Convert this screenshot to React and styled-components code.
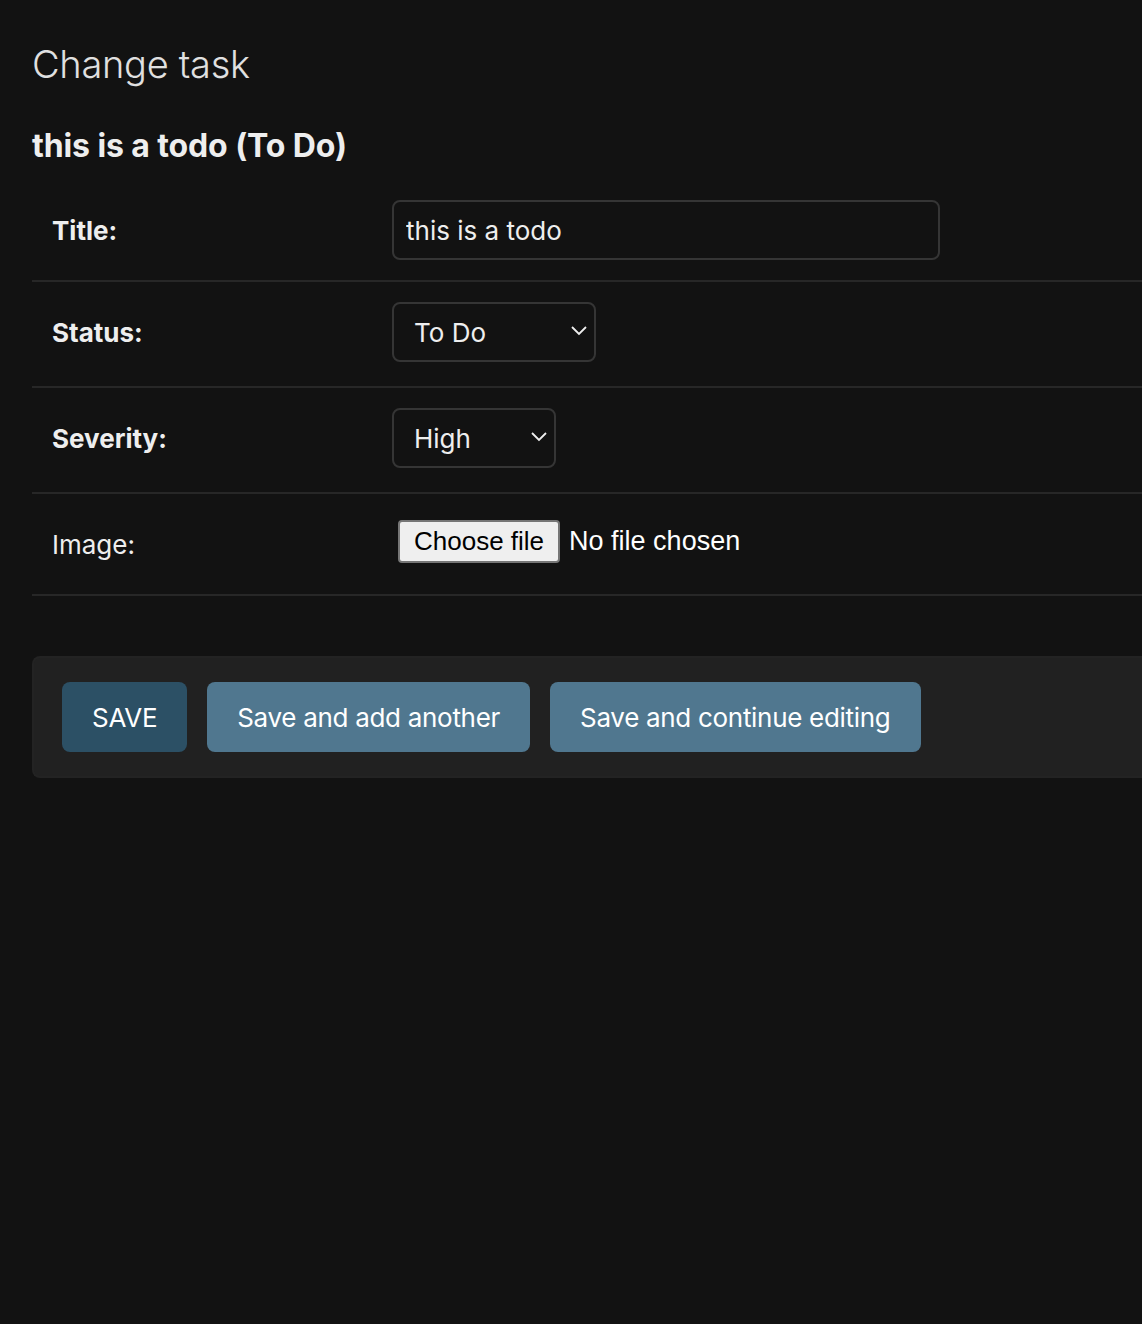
import React from "react";
import styled, { createGlobalStyle } from "styled-components";

const Global = createGlobalStyle`
  html, body { margin: 0; padding: 0; background: #121212; }
  body { font-family: Inter, "Noto Sans", sans-serif; color: #eeeeee; overflow: hidden; }
  * { box-sizing: border-box; }
`;

const Page = styled.main`
  min-height: 1324px;
  padding: 40px 0 0 32px;
`;

const Title = styled.h1`
  margin: 0;
  font-size: 38px;
  font-weight: 300;
  line-height: 48px;
  color: #e0e0e0;
  letter-spacing: -0.3px;
`;

const Subtitle = styled.h2`
  margin: 38px 0 0;
  font-size: 32px;
  font-weight: 700;
  line-height: 40px;
  color: #eeeeee;
  letter-spacing: -0.1px;
`;

const Fieldset = styled.fieldset`
  margin: 14px 0 0;
  padding: 0;
  border: none;
`;

const Row = styled.div`
  display: flex;
  align-items: center;
  padding: ${(p) => (p.$select ? "20px 20px 24px" : "20px")};
  min-height: ${(p) => p.$h || 100}px;
  border-bottom: 2px solid #272727;
`;

const Label = styled.label`
  width: 340px;
  flex: none;
  font-size: 26px;
  font-weight: ${(p) => (p.$required ? 700 : 400)};
  color: #eeeeee;
`;

const TextInput = styled.input`
  width: 548px;
  height: 60px;
  padding: 0 12px;
  background: #121212;
  border: 2px solid #353535;
  border-radius: 8px;
  color: #eeeeee;
  font-family: Inter, sans-serif;
  font-size: 26px;
  outline: none;
`;

const SelectWrap = styled.div`
  position: relative;
  width: ${(p) => p.$w}px;
  height: 60px;
`;

const Select = styled.select`
  appearance: none;
  width: 100%;
  height: 100%;
  padding: 0 40px 0 20px;
  background: #121212;
  border: 2px solid #353535;
  border-radius: 8px;
  color: #eeeeee;
  font-family: Inter, sans-serif;
  font-size: 26px;
  outline: none;
`;

const Chevron = styled.svg`
  position: absolute;
  right: 8px;
  top: 23px;
  width: 18px;
  height: 12px;
  pointer-events: none;
`;

const FileWrap = styled.div`
  display: flex;
  align-items: center;
  gap: 9px;
  padding-left: 6px;
  margin-top: -6px;
  font-family: "Liberation Sans", Arial, sans-serif;
  font-size: 27px;
  color: #ffffff;
`;

const FileButton = styled.button`
  height: 43px;
  padding: 0 14px;
  background: #efefef;
  border: 2px solid #767676;
  border-radius: 4px;
  color: #000;
  font-family: "Liberation Sans", Arial, sans-serif;
  font-size: 26px;
`;

const SubmitRow = styled.div`
  display: flex;
  gap: 20px;
  margin-top: 60px;
  padding: 24px 28px;
  background: #212121;
  border: 2px solid #232323;
  border-right: none;
  border-radius: 8px 0 0 8px;
`;

const Button = styled.button`
  height: 70px;
  padding: 0 30px;
  border: none;
  border-radius: 8px;
  background: ${(p) => (p.$primary ? "#2c5065" : "#50778f")};
  color: #ffffff;
  font-family: Inter, sans-serif;
  font-size: 26px;
  font-weight: 400;
  letter-spacing: -0.3px;
`;

function SelectField({ width, value, options }) {
  return (
    <SelectWrap $w={width}>
      <Select defaultValue={value}>
        {options.map((o) => (
          <option key={o}>{o}</option>
        ))}
      </Select>
      <Chevron viewBox="0 0 18 12">
        <path d="M2 2 L9 9 L16 2" fill="none" stroke="#eeeeee" strokeWidth="1.8" />
      </Chevron>
    </SelectWrap>
  );
}

export default function App() {
  return (
    <>
      <Global />
      <Page>
        <Title>Change task</Title>
        <Subtitle>this is a todo (To Do)</Subtitle>
        <Fieldset>
          <Row $h={102}>
            <Label $required>Title:</Label>
            <TextInput defaultValue="this is a todo" />
          </Row>
          <Row $h={106} $select>
            <Label $required>Status:</Label>
            <SelectField width={204} value="To Do" options={["To Do", "In Progress", "Done"]} />
          </Row>
          <Row $h={106} $select>
            <Label $required>Severity:</Label>
            <SelectField width={164} value="High" options={["Low", "Medium", "High"]} />
          </Row>
          <Row $h={102}>
            <Label>Image:</Label>
            <FileWrap>
              <FileButton>Choose file</FileButton>
              <span>No file chosen</span>
            </FileWrap>
          </Row>
        </Fieldset>
        <SubmitRow>
          <Button $primary>SAVE</Button>
          <Button>Save and add another</Button>
          <Button>Save and continue editing</Button>
        </SubmitRow>
      </Page>
    </>
  );
}
